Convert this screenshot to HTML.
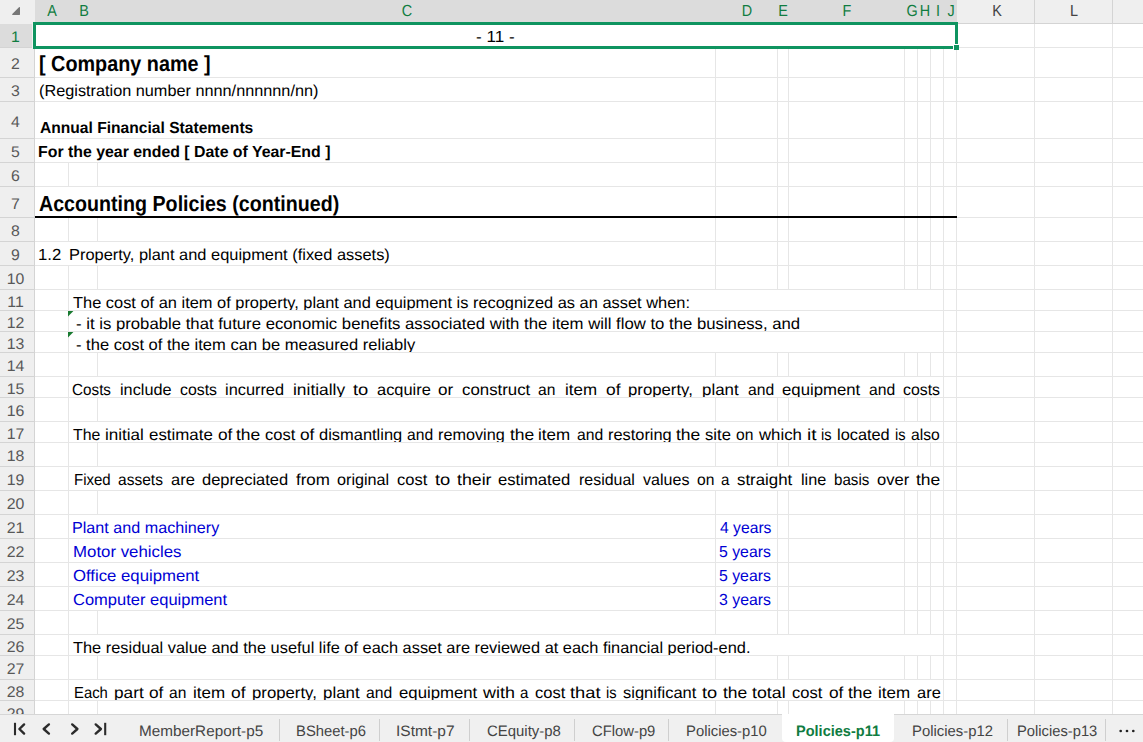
<!DOCTYPE html>
<html lang="en"><head><meta charset="utf-8"><title>Policies-p11</title>
<style>
html,body{margin:0;padding:0;}
body{width:1143px;height:742px;overflow:hidden;background:#fff;position:relative;font-family:"Liberation Sans",sans-serif;}
.a{position:absolute;}
.t{position:absolute;white-space:nowrap;transform-origin:0 50%;display:block;}
.hl{position:absolute;height:1px;background:#e6e6e6;}
.vl{position:absolute;width:1px;background:#e6e6e6;}
.w{position:absolute;background:#fff;}
</style></head><body>
<div id="grid">
<div class="hl" style="left:35px;top:47px;width:1108px"></div>
<div class="hl" style="left:35px;top:77px;width:1108px"></div>
<div class="hl" style="left:35px;top:101px;width:1108px"></div>
<div class="hl" style="left:35px;top:138px;width:1108px"></div>
<div class="hl" style="left:35px;top:162px;width:1108px"></div>
<div class="hl" style="left:35px;top:186px;width:1108px"></div>
<div class="hl" style="left:35px;top:217px;width:1108px"></div>
<div class="hl" style="left:35px;top:241px;width:1108px"></div>
<div class="hl" style="left:35px;top:265px;width:1108px"></div>
<div class="hl" style="left:35px;top:289px;width:1108px"></div>
<div class="hl" style="left:35px;top:310px;width:1108px"></div>
<div class="hl" style="left:35px;top:331px;width:1108px"></div>
<div class="hl" style="left:35px;top:352px;width:1108px"></div>
<div class="hl" style="left:35px;top:376px;width:1108px"></div>
<div class="hl" style="left:35px;top:397px;width:1108px"></div>
<div class="hl" style="left:35px;top:421px;width:1108px"></div>
<div class="hl" style="left:35px;top:442px;width:1108px"></div>
<div class="hl" style="left:35px;top:466px;width:1108px"></div>
<div class="hl" style="left:35px;top:490px;width:1108px"></div>
<div class="hl" style="left:35px;top:514px;width:1108px"></div>
<div class="hl" style="left:35px;top:538px;width:1108px"></div>
<div class="hl" style="left:35px;top:562px;width:1108px"></div>
<div class="hl" style="left:35px;top:586px;width:1108px"></div>
<div class="hl" style="left:35px;top:610px;width:1108px"></div>
<div class="hl" style="left:35px;top:634px;width:1108px"></div>
<div class="hl" style="left:35px;top:655px;width:1108px"></div>
<div class="hl" style="left:35px;top:679px;width:1108px"></div>
<div class="hl" style="left:35px;top:700px;width:1108px"></div>
<div class="vl" style="left:68px;top:24px;height:690px"></div>
<div class="vl" style="left:97px;top:24px;height:690px"></div>
<div class="vl" style="left:715px;top:24px;height:690px"></div>
<div class="vl" style="left:777px;top:24px;height:690px"></div>
<div class="vl" style="left:788px;top:24px;height:690px"></div>
<div class="vl" style="left:904px;top:24px;height:690px"></div>
<div class="vl" style="left:917px;top:24px;height:690px"></div>
<div class="vl" style="left:930px;top:24px;height:690px"></div>
<div class="vl" style="left:943px;top:24px;height:690px"></div>
<div class="vl" style="left:956px;top:24px;height:690px"></div>
<div class="vl" style="left:1034px;top:24px;height:690px"></div>
<div class="vl" style="left:1112px;top:24px;height:690px"></div>
</div>
<div id="covers">
<div class="w" style="left:35px;top:24px;width:921px;height:23px"></div>
<div class="w" style="left:35px;top:48px;width:680px;height:29px"></div>
<div class="w" style="left:35px;top:78px;width:680px;height:23px"></div>
<div class="w" style="left:35px;top:102px;width:680px;height:36px"></div>
<div class="w" style="left:35px;top:139px;width:680px;height:23px"></div>
<div class="w" style="left:35px;top:187px;width:680px;height:30px"></div>
<div class="w" style="left:35px;top:242px;width:680px;height:23px"></div>
<div class="w" style="left:69px;top:290px;width:874px;height:20px"></div>
<div class="w" style="left:69px;top:311px;width:874px;height:20px"></div>
<div class="w" style="left:69px;top:332px;width:874px;height:20px"></div>
<div class="w" style="left:69px;top:377px;width:874px;height:20px"></div>
<div class="w" style="left:69px;top:422px;width:874px;height:20px"></div>
<div class="w" style="left:69px;top:467px;width:874px;height:23px"></div>
<div class="w" style="left:69px;top:635px;width:874px;height:20px"></div>
<div class="w" style="left:69px;top:680px;width:874px;height:20px"></div>
<div class="w" style="left:69px;top:515px;width:646px;height:23px"></div>
<div class="w" style="left:69px;top:539px;width:646px;height:23px"></div>
<div class="w" style="left:69px;top:563px;width:646px;height:23px"></div>
<div class="w" style="left:69px;top:587px;width:646px;height:23px"></div>
</div>
<div class="a" style="left:35px;top:216px;width:922px;height:2px;background:#000"></div>
<div id="cells">
<span class="t " id="r1" style="left:476.31px;top:26.00px;font-size:16px;line-height:21px;color:#000;transform:matrix(1.0666,0,0.001,1,0,0);">- 11 -</span>
<span class="t " id="r2" style="left:39.05px;top:49.00px;font-size:21.8px;line-height:29px;color:#000;font-weight:700;transform:matrix(0.9082,0,0.001,1,0,0);">[ Company name ]</span>
<span class="t " id="r3" style="left:38.56px;top:80.00px;font-size:16px;line-height:21px;color:#000;transform:matrix(1.0167,0,0.001,1,0,0);">(Registration number nnnn/nnnnnn/nn)</span>
<span class="t " id="r4" style="left:39.63px;top:117.00px;font-size:16px;line-height:21px;color:#000;font-weight:700;transform:matrix(0.9751,0,0.001,1,0,0);">Annual Financial Statements</span>
<span class="t " id="r5" style="left:38.39px;top:141.00px;font-size:16px;line-height:21px;color:#000;font-weight:700;transform:matrix(0.9917,0,0.001,1,0,0);">For the year ended [ Date of Year-End ]</span>
<span class="t " id="r7" style="left:38.79px;top:189.00px;font-size:21.8px;line-height:29px;color:#000;font-weight:700;transform:matrix(0.9014,0,0.001,1,0,0);">Accounting Policies (continued)</span>
<span class="t " id="r9a" style="left:38.14px;top:244.00px;font-size:16px;line-height:21px;color:#000;transform:matrix(1.0442,0,0.001,1,0,0);">1.2</span>
<span class="t " id="r9b" style="left:69.31px;top:244.00px;font-size:16px;line-height:21px;color:#000;transform:matrix(1.0257,0,0.001,1,0,0);">Property, plant and equipment (fixed assets)</span>
<div class="a" style="left:69px;top:290px;width:874px;height:20px;overflow:hidden"><span class="t " id="r11" style="left:4.25px;top:2.00px;font-size:16px;line-height:21px;color:#000;transform:matrix(1.0251,0,0.001,1,0,0);">The cost of an item of property, plant and equipment is recognized as an asset when:</span></div>
<div class="a" style="left:69px;top:311px;width:874px;height:20px;overflow:hidden"><span class="t " id="r12" style="left:7.09px;top:2.00px;font-size:16px;line-height:21px;color:#000;transform:matrix(1.0452,0,0.001,1,0,0);">- it is probable that future economic benefits associated with the item will flow to the business, and</span></div>
<div class="a" style="left:69px;top:332px;width:874px;height:20px;overflow:hidden"><span class="t " id="r13" style="left:7.09px;top:2.00px;font-size:16px;line-height:21px;color:#000;transform:matrix(1.0336,0,0.001,1,0,0);">- the cost of the item can be measured reliably</span></div>
<div class="a" id="r15" style="left:69px;top:377px;width:874px;height:20px;overflow:hidden"><span class="t" id="r15_0" style="left:2.81px;top:2.00px;font-size:16px;line-height:21px;color:#000;transform:matrix(0.9534,0,0.001,1,0,0)">Costs</span> <span class="t" id="r15_1" style="left:50.91px;top:2.00px;font-size:16px;line-height:21px;color:#000;transform:matrix(1.0157,0,0.001,1,0,0)">include</span> <span class="t" id="r15_2" style="left:110.99px;top:2.00px;font-size:16px;line-height:21px;color:#000;transform:matrix(0.9908,0,0.001,1,0,0)">costs</span> <span class="t" id="r15_3" style="left:156.25px;top:2.00px;font-size:16px;line-height:21px;color:#000;transform:matrix(1.0205,0,0.001,1,0,0)">incurred</span> <span class="t" id="r15_4" style="left:223.84px;top:2.00px;font-size:16px;line-height:21px;color:#000;transform:matrix(1.0851,0,0.001,1,0,0)">initially</span> <span class="t" id="r15_5" style="left:284.10px;top:2.00px;font-size:16px;line-height:21px;color:#000;transform:matrix(1.1466,0,0.001,1,0,0)">to</span> <span class="t" id="r15_6" style="left:307.82px;top:2.00px;font-size:16px;line-height:21px;color:#000;transform:matrix(1.0251,0,0.001,1,0,0)">acquire</span> <span class="t" id="r15_7" style="left:369.19px;top:2.00px;font-size:16px;line-height:21px;color:#000;transform:matrix(1.0678,0,0.001,1,0,0)">or</span> <span class="t" id="r15_8" style="left:392.59px;top:2.00px;font-size:16px;line-height:21px;color:#000;transform:matrix(1.0520,0,0.001,1,0,0)">construct</span> <span class="t" id="r15_9" style="left:468.90px;top:2.00px;font-size:16px;line-height:21px;color:#000;transform:matrix(0.9777,0,0.001,1,0,0)">an</span> <span class="t" id="r15_10" style="left:495.88px;top:2.00px;font-size:16px;line-height:21px;color:#000;transform:matrix(1.0584,0,0.001,1,0,0)">item</span> <span class="t" id="r15_11" style="left:536.55px;top:2.00px;font-size:16px;line-height:21px;color:#000;transform:matrix(1.0867,0,0.001,1,0,0)">of</span> <span class="t" id="r15_12" style="left:558.94px;top:2.00px;font-size:16px;line-height:21px;color:#000;transform:matrix(1.0460,0,0.001,1,0,0)">property,</span> <span class="t" id="r15_13" style="left:633.04px;top:2.00px;font-size:16px;line-height:21px;color:#000;transform:matrix(1.0547,0,0.001,1,0,0)">plant</span> <span class="t" id="r15_14" style="left:678.74px;top:2.00px;font-size:16px;line-height:21px;color:#000;transform:matrix(0.9812,0,0.001,1,0,0)">and</span> <span class="t" id="r15_15" style="left:713.05px;top:2.00px;font-size:16px;line-height:21px;color:#000;transform:matrix(1.0466,0,0.001,1,0,0)">equipment</span> <span class="t" id="r15_16" style="left:799.58px;top:2.00px;font-size:16px;line-height:21px;color:#000;transform:matrix(0.9812,0,0.001,1,0,0)">and</span> <span class="t" id="r15_17" style="left:834.27px;top:2.00px;font-size:16px;line-height:21px;color:#000;transform:matrix(0.9908,0,0.001,1,0,0)">costs</span></div>
<div class="a" id="r17" style="left:69px;top:422px;width:874px;height:20px;overflow:hidden"><span class="t" id="r17_0" style="left:3.64px;top:2.00px;font-size:16px;line-height:21px;color:#000;transform:matrix(0.9899,0,0.001,1,0,0)">The</span> <span class="t" id="r17_1" style="left:36.07px;top:2.00px;font-size:16px;line-height:21px;color:#000;transform:matrix(1.0667,0,0.001,1,0,0)">initial</span> <span class="t" id="r17_2" style="left:80.13px;top:2.00px;font-size:16px;line-height:21px;color:#000;transform:matrix(1.0551,0,0.001,1,0,0)">estimate</span> <span class="t" id="r17_3" style="left:148.97px;top:2.00px;font-size:16px;line-height:21px;color:#000;transform:matrix(1.0792,0,0.001,1,0,0)">of</span> <span class="t" id="r17_4" style="left:167.03px;top:2.00px;font-size:16px;line-height:21px;color:#000;transform:matrix(1.0921,0,0.001,1,0,0)">the</span> <span class="t" id="r17_5" style="left:195.68px;top:2.00px;font-size:16px;line-height:21px;color:#000;transform:matrix(1.0326,0,0.001,1,0,0)">cost</span> <span class="t" id="r17_6" style="left:230.83px;top:2.00px;font-size:16px;line-height:21px;color:#000;transform:matrix(1.0792,0,0.001,1,0,0)">of</span> <span class="t" id="r17_7" style="left:249.80px;top:2.00px;font-size:16px;line-height:21px;color:#000;transform:matrix(1.0280,0,0.001,1,0,0)">dismantling</span> <span class="t" id="r17_8" style="left:337.70px;top:2.00px;font-size:16px;line-height:21px;color:#000;transform:matrix(0.9774,0,0.001,1,0,0)">and</span> <span class="t" id="r17_9" style="left:369.34px;top:2.00px;font-size:16px;line-height:21px;color:#000;transform:matrix(1.0135,0,0.001,1,0,0)">removing</span> <span class="t" id="r17_10" style="left:440.75px;top:2.00px;font-size:16px;line-height:21px;color:#000;transform:matrix(1.0921,0,0.001,1,0,0)">the</span> <span class="t" id="r17_11" style="left:469.48px;top:2.00px;font-size:16px;line-height:21px;color:#000;transform:matrix(1.0617,0,0.001,1,0,0)">item</span> <span class="t" id="r17_12" style="left:507.66px;top:2.00px;font-size:16px;line-height:21px;color:#000;transform:matrix(0.9812,0,0.001,1,0,0)">and</span> <span class="t" id="r17_13" style="left:539.47px;top:2.00px;font-size:16px;line-height:21px;color:#000;transform:matrix(1.0233,0,0.001,1,0,0)">restoring</span> <span class="t" id="r17_14" style="left:607.03px;top:2.00px;font-size:16px;line-height:21px;color:#000;transform:matrix(1.0921,0,0.001,1,0,0)">the</span> <span class="t" id="r17_15" style="left:636.17px;top:2.00px;font-size:16px;line-height:21px;color:#000;transform:matrix(1.0399,0,0.001,1,0,0)">site</span> <span class="t" id="r17_16" style="left:667.04px;top:2.00px;font-size:16px;line-height:21px;color:#000;transform:matrix(0.9777,0,0.001,1,0,0)">on</span> <span class="t" id="r17_17" style="left:689.76px;top:2.00px;font-size:16px;line-height:21px;color:#000;transform:matrix(1.0487,0,0.001,1,0,0)">which</span> <span class="t" id="r17_18" style="left:737.51px;top:2.00px;font-size:16px;line-height:21px;color:#000;transform:matrix(1.2000,0,0.001,1,0,0)">it</span> <span class="t" id="r17_19" style="left:751.94px;top:2.00px;font-size:16px;line-height:21px;color:#000;transform:matrix(0.9168,0,0.001,1,0,0)">is</span> <span class="t" id="r17_20" style="left:768.43px;top:2.00px;font-size:16px;line-height:21px;color:#000;transform:matrix(1.0214,0,0.001,1,0,0)">located</span> <span class="t" id="r17_21" style="left:826.38px;top:2.00px;font-size:16px;line-height:21px;color:#000;transform:matrix(0.9168,0,0.001,1,0,0)">is</span> <span class="t" id="r17_22" style="left:842.48px;top:2.00px;font-size:16px;line-height:21px;color:#000;transform:matrix(0.9809,0,0.001,1,0,0)">also</span></div>
<div class="a" id="r19" style="left:0;top:0"><span class="t" id="r19_0" style="left:73.52px;top:469.00px;font-size:16px;line-height:21px;color:#000;transform:matrix(0.9380,0,0.001,1,0,0)">Fixed</span> <span class="t" id="r19_1" style="left:118.11px;top:469.00px;font-size:16px;line-height:21px;color:#000;transform:matrix(0.9708,0,0.001,1,0,0)">assets</span> <span class="t" id="r19_2" style="left:170.59px;top:469.00px;font-size:16px;line-height:21px;color:#000;transform:matrix(1.0335,0,0.001,1,0,0)">are</span> <span class="t" id="r19_3" style="left:202.36px;top:469.00px;font-size:16px;line-height:21px;color:#000;transform:matrix(1.0308,0,0.001,1,0,0)">depreciated</span> <span class="t" id="r19_4" style="left:296.14px;top:469.00px;font-size:16px;line-height:21px;color:#000;transform:matrix(1.0594,0,0.001,1,0,0)">from</span> <span class="t" id="r19_5" style="left:337.41px;top:469.00px;font-size:16px;line-height:21px;color:#000;transform:matrix(1.0118,0,0.001,1,0,0)">original</span> <span class="t" id="r19_6" style="left:397.12px;top:469.00px;font-size:16px;line-height:21px;color:#000;transform:matrix(1.0326,0,0.001,1,0,0)">cost</span> <span class="t" id="r19_7" style="left:434.52px;top:469.00px;font-size:16px;line-height:21px;color:#000;transform:matrix(1.1466,0,0.001,1,0,0)">to</span> <span class="t" id="r19_8" style="left:457.21px;top:469.00px;font-size:16px;line-height:21px;color:#000;transform:matrix(1.1084,0,0.001,1,0,0)">their</span> <span class="t" id="r19_9" style="left:498.42px;top:469.00px;font-size:16px;line-height:21px;color:#000;transform:matrix(1.0422,0,0.001,1,0,0)">estimated</span> <span class="t" id="r19_10" style="left:579.30px;top:469.00px;font-size:16px;line-height:21px;color:#000;transform:matrix(0.9959,0,0.001,1,0,0)">residual</span> <span class="t" id="r19_11" style="left:643.17px;top:469.00px;font-size:16px;line-height:21px;color:#000;transform:matrix(1.0032,0,0.001,1,0,0)">values</span> <span class="t" id="r19_12" style="left:696.60px;top:469.00px;font-size:16px;line-height:21px;color:#000;transform:matrix(0.9777,0,0.001,1,0,0)">on</span> <span class="t" id="r19_13" style="left:721.33px;top:469.00px;font-size:16px;line-height:21px;color:#000;transform:matrix(0.9432,0,0.001,1,0,0)">a</span> <span class="t" id="r19_14" style="left:737.47px;top:469.00px;font-size:16px;line-height:21px;color:#000;transform:matrix(1.0540,0,0.001,1,0,0)">straight</span> <span class="t" id="r19_15" style="left:800.98px;top:469.00px;font-size:16px;line-height:21px;color:#000;transform:matrix(1.0158,0,0.001,1,0,0)">line</span> <span class="t" id="r19_16" style="left:834.25px;top:469.00px;font-size:16px;line-height:21px;color:#000;transform:matrix(0.9449,0,0.001,1,0,0)">basis</span> <span class="t" id="r19_17" style="left:876.73px;top:469.00px;font-size:16px;line-height:21px;color:#000;transform:matrix(1.0345,0,0.001,1,0,0)">over</span> <span class="t" id="r19_18" style="left:916.11px;top:469.00px;font-size:16px;line-height:21px;color:#000;transform:matrix(1.0921,0,0.001,1,0,0)">the</span></div>
<span class="t " id="r21" style="left:72.42px;top:517.00px;font-size:16px;line-height:21px;color:#0000d4;transform:matrix(1.0092,0,0.001,1,0,0);">Plant and machinery</span>
<span class="t " id="r22" style="left:72.75px;top:541.00px;font-size:16px;line-height:21px;color:#0000d4;transform:matrix(1.0518,0,0.001,1,0,0);">Motor vehicles</span>
<span class="t " id="r23" style="left:72.67px;top:565.00px;font-size:16px;line-height:21px;color:#0000d4;transform:matrix(1.0456,0,0.001,1,0,0);">Office equipment</span>
<span class="t " id="r24" style="left:72.50px;top:589.00px;font-size:16px;line-height:21px;color:#0000d4;transform:matrix(1.0312,0,0.001,1,0,0);">Computer equipment</span>
<span class="t " id="r21d" style="left:719.60px;top:517.00px;font-size:16px;line-height:21px;color:#0000d4;transform:matrix(0.9807,0,0.001,1,0,0);">4 years</span>
<span class="t " id="r22d" style="left:718.74px;top:541.00px;font-size:16px;line-height:21px;color:#0000d4;transform:matrix(0.9894,0,0.001,1,0,0);">5 years</span>
<span class="t " id="r23d" style="left:718.74px;top:565.00px;font-size:16px;line-height:21px;color:#0000d4;transform:matrix(0.9894,0,0.001,1,0,0);">5 years</span>
<span class="t " id="r24d" style="left:719.44px;top:589.00px;font-size:16px;line-height:21px;color:#0000d4;transform:matrix(0.9908,0,0.001,1,0,0);">3 years</span>
<div class="a" style="left:69px;top:635px;width:874px;height:20px;overflow:hidden"><span class="t " id="r26" style="left:4.25px;top:2.00px;font-size:16px;line-height:21px;color:#000;transform:matrix(1.0237,0,0.001,1,0,0);">The residual value and the useful life of each asset are reviewed at each financial period-end.</span></div>
<div class="a" id="r28" style="left:69px;top:680px;width:874px;height:20px;overflow:hidden"><span class="t" id="r28_0" style="left:4.59px;top:2.00px;font-size:16px;line-height:21px;color:#000;transform:matrix(0.9268,0,0.001,1,0,0)">Each</span> <span class="t" id="r28_1" style="left:44.84px;top:2.00px;font-size:16px;line-height:21px;color:#000;transform:matrix(1.0769,0,0.001,1,0,0)">part</span> <span class="t" id="r28_2" style="left:80.41px;top:2.00px;font-size:16px;line-height:21px;color:#000;transform:matrix(1.0792,0,0.001,1,0,0)">of</span> <span class="t" id="r28_3" style="left:99.93px;top:2.00px;font-size:16px;line-height:21px;color:#000;transform:matrix(0.9721,0,0.001,1,0,0)">an</span> <span class="t" id="r28_4" style="left:124.12px;top:2.00px;font-size:16px;line-height:21px;color:#000;transform:matrix(1.0617,0,0.001,1,0,0)">item</span> <span class="t" id="r28_5" style="left:162.47px;top:2.00px;font-size:16px;line-height:21px;color:#000;transform:matrix(1.0867,0,0.001,1,0,0)">of</span> <span class="t" id="r28_6" style="left:183.22px;top:2.00px;font-size:16px;line-height:21px;color:#000;transform:matrix(1.0460,0,0.001,1,0,0)">property,</span> <span class="t" id="r28_7" style="left:253.88px;top:2.00px;font-size:16px;line-height:21px;color:#000;transform:matrix(1.0547,0,0.001,1,0,0)">plant</span> <span class="t" id="r28_8" style="left:297.08px;top:2.00px;font-size:16px;line-height:21px;color:#000;transform:matrix(0.9812,0,0.001,1,0,0)">and</span> <span class="t" id="r28_9" style="left:329.55px;top:2.00px;font-size:16px;line-height:21px;color:#000;transform:matrix(1.0466,0,0.001,1,0,0)">equipment</span> <span class="t" id="r28_10" style="left:413.59px;top:2.00px;font-size:16px;line-height:21px;color:#000;transform:matrix(1.1211,0,0.001,1,0,0)">with</span> <span class="t" id="r28_11" style="left:450.97px;top:2.00px;font-size:16px;line-height:21px;color:#000;transform:matrix(0.9432,0,0.001,1,0,0)">a</span> <span class="t" id="r28_12" style="left:465.76px;top:2.00px;font-size:16px;line-height:21px;color:#000;transform:matrix(1.0326,0,0.001,1,0,0)">cost</span> <span class="t" id="r28_13" style="left:501.19px;top:2.00px;font-size:16px;line-height:21px;color:#000;transform:matrix(1.1466,0,0.001,1,0,0)">that</span> <span class="t" id="r28_14" style="left:537.44px;top:2.00px;font-size:16px;line-height:21px;color:#000;transform:matrix(0.9168,0,0.001,1,0,0)">is</span> <span class="t" id="r28_15" style="left:553.84px;top:2.00px;font-size:16px;line-height:21px;color:#000;transform:matrix(1.0301,0,0.001,1,0,0)">significant</span> <span class="t" id="r28_16" style="left:632.71px;top:2.00px;font-size:16px;line-height:21px;color:#000;transform:matrix(1.1391,0,0.001,1,0,0)">to</span> <span class="t" id="r28_17" style="left:653.61px;top:2.00px;font-size:16px;line-height:21px;color:#000;transform:matrix(1.0921,0,0.001,1,0,0)">the</span> <span class="t" id="r28_18" style="left:683.18px;top:2.00px;font-size:16px;line-height:21px;color:#000;transform:matrix(1.1107,0,0.001,1,0,0)">total</span> <span class="t" id="r28_19" style="left:723.40px;top:2.00px;font-size:16px;line-height:21px;color:#000;transform:matrix(1.0326,0,0.001,1,0,0)">cost</span> <span class="t" id="r28_20" style="left:759.55px;top:2.00px;font-size:16px;line-height:21px;color:#000;transform:matrix(1.0792,0,0.001,1,0,0)">of</span> <span class="t" id="r28_21" style="left:778.67px;top:2.00px;font-size:16px;line-height:21px;color:#000;transform:matrix(1.0921,0,0.001,1,0,0)">the</span> <span class="t" id="r28_22" style="left:809.20px;top:2.00px;font-size:16px;line-height:21px;color:#000;transform:matrix(1.0617,0,0.001,1,0,0)">item</span> <span class="t" id="r28_23" style="left:847.67px;top:2.00px;font-size:16px;line-height:21px;color:#000;transform:matrix(1.0292,0,0.001,1,0,0)">are</span></div>
</div>
<svg class="a" style="left:68px;top:311px" width="7" height="7" viewBox="0 0 7 7"><path d="M0 0H5.4L0 5.4Z" fill="#187a30"/></svg>
<svg class="a" style="left:68px;top:332px" width="7" height="7" viewBox="0 0 7 7"><path d="M0 0H5.4L0 5.4Z" fill="#187a30"/></svg>
<div id="colhdr" class="a" style="left:0;top:0;width:1143px;height:24px;background:#efefef">
<div class="a" style="left:957px;top:23px;width:186px;height:1px;background:#d4d4d4"></div>
<div class="a" style="left:35px;top:0;width:922px;height:24px;background:#dcdcdc"></div>
<div class="a" style="left:1034px;top:0;width:1px;height:24px;background:#d4d4d4"></div>
<div class="a" style="left:1112px;top:0;width:1px;height:24px;background:#d4d4d4"></div>
<svg class="a" style="left:11px;top:6px" width="10" height="10" viewBox="0 0 10 10"><path d="M8.4 1.6V8.3H1.7Z" fill="#777" stroke="#777" stroke-width="1.2" stroke-linejoin="round"/></svg>
</div>
<div id="collabels">
<span class="t ch" id="hA" style="left:42.2px;top:0px;width:20px;text-align:center;font-size:16px;line-height:21px;color:#107c41;transform-origin:50% 50%;transform:matrix(0.9000,0,0.001,1,0,0)">A</span>
<span class="t ch" id="hB" style="left:74.2px;top:0px;width:20px;text-align:center;font-size:16px;line-height:21px;color:#107c41;transform-origin:50% 50%;transform:matrix(0.9000,0,0.001,1,0,0)">B</span>
<span class="t ch" id="hC" style="left:396.5px;top:0px;width:20px;text-align:center;font-size:16px;line-height:21px;color:#107c41;transform-origin:50% 50%;transform:matrix(0.9000,0,0.001,1,0,0)">C</span>
<span class="t ch" id="hD" style="left:736.5px;top:0px;width:20px;text-align:center;font-size:16px;line-height:21px;color:#107c41;transform-origin:50% 50%;transform:matrix(0.9000,0,0.001,1,0,0)">D</span>
<span class="t ch" id="hE" style="left:773px;top:0px;width:20px;text-align:center;font-size:16px;line-height:21px;color:#107c41;transform-origin:50% 50%;transform:matrix(0.9000,0,0.001,1,0,0)">E</span>
<span class="t ch" id="hF" style="left:836.5px;top:0px;width:20px;text-align:center;font-size:16px;line-height:21px;color:#107c41;transform-origin:50% 50%;transform:matrix(0.9000,0,0.001,1,0,0)">F</span>
<span class="t ch" id="hG" style="left:901.8px;top:0px;width:20px;text-align:center;font-size:16px;line-height:21px;color:#107c41;transform-origin:50% 50%;transform:matrix(0.9000,0,0.001,1,0,0)">G</span>
<span class="t ch" id="hH" style="left:914.8px;top:0px;width:20px;text-align:center;font-size:16px;line-height:21px;color:#107c41;transform-origin:50% 50%;transform:matrix(0.9000,0,0.001,1,0,0)">H</span>
<span class="t ch" id="hI" style="left:927.5px;top:0px;width:20px;text-align:center;font-size:16px;line-height:21px;color:#107c41;transform-origin:50% 50%;transform:matrix(0.9000,0,0.001,1,0,0)">I</span>
<span class="t ch" id="hJ" style="left:940.5px;top:0px;width:20px;text-align:center;font-size:16px;line-height:21px;color:#107c41;transform-origin:50% 50%;transform:matrix(0.9000,0,0.001,1,0,0)">J</span>
<span class="t ch" id="hK" style="left:987.2px;top:0px;width:20px;text-align:center;font-size:16px;line-height:21px;color:#444;transform-origin:50% 50%;transform:matrix(0.9000,0,0.001,1,0,0)">K</span>
<span class="t ch" id="hL" style="left:1063.5px;top:0px;width:20px;text-align:center;font-size:16px;line-height:21px;color:#444;transform-origin:50% 50%;transform:matrix(0.9000,0,0.001,1,0,0)">L</span>
</div>
<div id="rowhdr" class="a" style="left:0;top:24px;width:34px;height:690px;background:#efefef;overflow:hidden">
<div class="a" style="left:0;top:0;width:34px;height:24px;background:#dcdcdc"></div>
<div class="a" style="left:0;top:23px;width:34px;height:1px;background:#d4d4d4"></div>
<div class="a" style="left:0;top:53px;width:34px;height:1px;background:#d4d4d4"></div>
<div class="a" style="left:0;top:77px;width:34px;height:1px;background:#d4d4d4"></div>
<div class="a" style="left:0;top:114px;width:34px;height:1px;background:#d4d4d4"></div>
<div class="a" style="left:0;top:138px;width:34px;height:1px;background:#d4d4d4"></div>
<div class="a" style="left:0;top:162px;width:34px;height:1px;background:#d4d4d4"></div>
<div class="a" style="left:0;top:193px;width:34px;height:1px;background:#d4d4d4"></div>
<div class="a" style="left:0;top:217px;width:34px;height:1px;background:#d4d4d4"></div>
<div class="a" style="left:0;top:241px;width:34px;height:1px;background:#d4d4d4"></div>
<div class="a" style="left:0;top:265px;width:34px;height:1px;background:#d4d4d4"></div>
<div class="a" style="left:0;top:286px;width:34px;height:1px;background:#d4d4d4"></div>
<div class="a" style="left:0;top:307px;width:34px;height:1px;background:#d4d4d4"></div>
<div class="a" style="left:0;top:328px;width:34px;height:1px;background:#d4d4d4"></div>
<div class="a" style="left:0;top:352px;width:34px;height:1px;background:#d4d4d4"></div>
<div class="a" style="left:0;top:373px;width:34px;height:1px;background:#d4d4d4"></div>
<div class="a" style="left:0;top:397px;width:34px;height:1px;background:#d4d4d4"></div>
<div class="a" style="left:0;top:418px;width:34px;height:1px;background:#d4d4d4"></div>
<div class="a" style="left:0;top:442px;width:34px;height:1px;background:#d4d4d4"></div>
<div class="a" style="left:0;top:466px;width:34px;height:1px;background:#d4d4d4"></div>
<div class="a" style="left:0;top:490px;width:34px;height:1px;background:#d4d4d4"></div>
<div class="a" style="left:0;top:514px;width:34px;height:1px;background:#d4d4d4"></div>
<div class="a" style="left:0;top:538px;width:34px;height:1px;background:#d4d4d4"></div>
<div class="a" style="left:0;top:562px;width:34px;height:1px;background:#d4d4d4"></div>
<div class="a" style="left:0;top:586px;width:34px;height:1px;background:#d4d4d4"></div>
<div class="a" style="left:0;top:610px;width:34px;height:1px;background:#d4d4d4"></div>
<div class="a" style="left:0;top:631px;width:34px;height:1px;background:#d4d4d4"></div>
<div class="a" style="left:0;top:655px;width:34px;height:1px;background:#d4d4d4"></div>
<div class="a" style="left:0;top:676px;width:34px;height:1px;background:#d4d4d4"></div>
<div class="a" style="left:0;top:700px;width:34px;height:1px;background:#d4d4d4"></div>
<span class="t" style="left:0;top:2.00px;width:31px;text-align:center;font-size:15.4px;line-height:21px;color:#107c41;transform-origin:50% 50%;transform:matrix(1.0300,0,0.001,1,0,0)">1</span>
<span class="t" style="left:0;top:29.00px;width:31px;text-align:center;font-size:15.4px;line-height:21px;color:#585858;transform-origin:50% 50%;transform:matrix(1.0300,0,0.001,1,0,0)">2</span>
<span class="t" style="left:0;top:56.00px;width:31px;text-align:center;font-size:15.4px;line-height:21px;color:#585858;transform-origin:50% 50%;transform:matrix(1.0300,0,0.001,1,0,0)">3</span>
<span class="t" style="left:0;top:87.00px;width:31px;text-align:center;font-size:15.4px;line-height:21px;color:#585858;transform-origin:50% 50%;transform:matrix(1.0300,0,0.001,1,0,0)">4</span>
<span class="t" style="left:0;top:117.00px;width:31px;text-align:center;font-size:15.4px;line-height:21px;color:#585858;transform-origin:50% 50%;transform:matrix(1.0300,0,0.001,1,0,0)">5</span>
<span class="t" style="left:0;top:141.00px;width:31px;text-align:center;font-size:15.4px;line-height:21px;color:#585858;transform-origin:50% 50%;transform:matrix(1.0300,0,0.001,1,0,0)">6</span>
<span class="t" style="left:0;top:169.00px;width:31px;text-align:center;font-size:15.4px;line-height:21px;color:#585858;transform-origin:50% 50%;transform:matrix(1.0300,0,0.001,1,0,0)">7</span>
<span class="t" style="left:0;top:196.00px;width:31px;text-align:center;font-size:15.4px;line-height:21px;color:#585858;transform-origin:50% 50%;transform:matrix(1.0300,0,0.001,1,0,0)">8</span>
<span class="t" style="left:0;top:220.00px;width:31px;text-align:center;font-size:15.4px;line-height:21px;color:#585858;transform-origin:50% 50%;transform:matrix(1.0300,0,0.001,1,0,0)">9</span>
<span class="t" style="left:0;top:244.00px;width:31px;text-align:center;font-size:15.4px;line-height:21px;color:#585858;transform-origin:50% 50%;transform:matrix(1.0300,0,0.001,1,0,0)">10</span>
<span class="t" style="left:0;top:267.00px;width:31px;text-align:center;font-size:15.4px;line-height:21px;color:#585858;transform-origin:50% 50%;transform:matrix(1.0300,0,0.001,1,0,0)">11</span>
<span class="t" style="left:0;top:288.00px;width:31px;text-align:center;font-size:15.4px;line-height:21px;color:#585858;transform-origin:50% 50%;transform:matrix(1.0300,0,0.001,1,0,0)">12</span>
<span class="t" style="left:0;top:309.00px;width:31px;text-align:center;font-size:15.4px;line-height:21px;color:#585858;transform-origin:50% 50%;transform:matrix(1.0300,0,0.001,1,0,0)">13</span>
<span class="t" style="left:0;top:331.00px;width:31px;text-align:center;font-size:15.4px;line-height:21px;color:#585858;transform-origin:50% 50%;transform:matrix(1.0300,0,0.001,1,0,0)">14</span>
<span class="t" style="left:0;top:354.00px;width:31px;text-align:center;font-size:15.4px;line-height:21px;color:#585858;transform-origin:50% 50%;transform:matrix(1.0300,0,0.001,1,0,0)">15</span>
<span class="t" style="left:0;top:376.00px;width:31px;text-align:center;font-size:15.4px;line-height:21px;color:#585858;transform-origin:50% 50%;transform:matrix(1.0300,0,0.001,1,0,0)">16</span>
<span class="t" style="left:0;top:399.00px;width:31px;text-align:center;font-size:15.4px;line-height:21px;color:#585858;transform-origin:50% 50%;transform:matrix(1.0300,0,0.001,1,0,0)">17</span>
<span class="t" style="left:0;top:421.00px;width:31px;text-align:center;font-size:15.4px;line-height:21px;color:#585858;transform-origin:50% 50%;transform:matrix(1.0300,0,0.001,1,0,0)">18</span>
<span class="t" style="left:0;top:445.00px;width:31px;text-align:center;font-size:15.4px;line-height:21px;color:#585858;transform-origin:50% 50%;transform:matrix(1.0300,0,0.001,1,0,0)">19</span>
<span class="t" style="left:0;top:469.00px;width:31px;text-align:center;font-size:15.4px;line-height:21px;color:#585858;transform-origin:50% 50%;transform:matrix(1.0300,0,0.001,1,0,0)">20</span>
<span class="t" style="left:0;top:493.00px;width:31px;text-align:center;font-size:15.4px;line-height:21px;color:#585858;transform-origin:50% 50%;transform:matrix(1.0300,0,0.001,1,0,0)">21</span>
<span class="t" style="left:0;top:517.00px;width:31px;text-align:center;font-size:15.4px;line-height:21px;color:#585858;transform-origin:50% 50%;transform:matrix(1.0300,0,0.001,1,0,0)">22</span>
<span class="t" style="left:0;top:541.00px;width:31px;text-align:center;font-size:15.4px;line-height:21px;color:#585858;transform-origin:50% 50%;transform:matrix(1.0300,0,0.001,1,0,0)">23</span>
<span class="t" style="left:0;top:565.00px;width:31px;text-align:center;font-size:15.4px;line-height:21px;color:#585858;transform-origin:50% 50%;transform:matrix(1.0300,0,0.001,1,0,0)">24</span>
<span class="t" style="left:0;top:589.00px;width:31px;text-align:center;font-size:15.4px;line-height:21px;color:#585858;transform-origin:50% 50%;transform:matrix(1.0300,0,0.001,1,0,0)">25</span>
<span class="t" style="left:0;top:612.00px;width:31px;text-align:center;font-size:15.4px;line-height:21px;color:#585858;transform-origin:50% 50%;transform:matrix(1.0300,0,0.001,1,0,0)">26</span>
<span class="t" style="left:0;top:634.00px;width:31px;text-align:center;font-size:15.4px;line-height:21px;color:#585858;transform-origin:50% 50%;transform:matrix(1.0300,0,0.001,1,0,0)">27</span>
<span class="t" style="left:0;top:657.00px;width:31px;text-align:center;font-size:15.4px;line-height:21px;color:#585858;transform-origin:50% 50%;transform:matrix(1.0300,0,0.001,1,0,0)">28</span>
<span class="t" style="left:0;top:679.00px;width:31px;text-align:center;font-size:15.4px;line-height:21px;color:#585858;transform-origin:50% 50%;transform:matrix(1.0300,0,0.001,1,0,0)">29</span>
</div>
<div class="a" style="left:34px;top:24px;width:1px;height:690px;background:#d4d4d4"></div>
<div class="a" style="left:32px;top:24px;width:1px;height:24px;background:#f3f3f3"></div>
<div id="sel" class="a" style="left:33px;top:22px;width:919px;height:21px;border:3px solid #0f9460"></div>
<div class="a" style="left:953px;top:44px;width:6px;height:6px;background:#fff"></div>
<div class="a" style="left:954px;top:45px;width:5px;height:5px;background:#0f9460"></div>
<div id="tabs" class="a" style="left:0;top:714px;width:1143px;height:28px;background:#f0f0f0">
<div class="a" style="left:0;top:0;width:1143px;height:1px;background:#d6d6d6"></div>
<div class="a" style="left:782px;top:0;width:112px;height:28px;background:#fff;border-radius:0 0 4px 4px"></div>
<svg class="a" style="left:0;top:0" width="120" height="28" viewBox="0 714 120 28" fill="none" stroke="#2b2b2b" stroke-width="2.4" stroke-linecap="round" stroke-linejoin="round"><path d="M15 722.8V735.2" stroke-linecap="butt" stroke-width="2.1"/><path d="M24.1 724.4L19.4 729L24.1 733.6"/><path d="M48.9 724.4L43.7 729L48.9 733.6"/><path d="M72.2 724.4L77.4 729L72.2 733.6"/><path d="M95.7 724.4L100.9 729L95.7 733.6"/><path d="M105.2 722.8V735.2" stroke-linecap="butt" stroke-width="2.1"/></svg>
<span class="t" id="tab0" style="left:138.85px;top:6.00px;font-size:15.1px;line-height:21px;color:#444;transform:matrix(1.0136,0,0.001,1,0,0)">MemberReport-p5</span>
<span class="t" id="tab1" style="left:295.56px;top:6.00px;font-size:15.1px;line-height:21px;color:#444;transform:matrix(0.9813,0,0.001,1,0,0)">BSheet-p6</span>
<span class="t" id="tab2" style="left:396.07px;top:6.00px;font-size:15.1px;line-height:21px;color:#444;transform:matrix(1.0257,0,0.001,1,0,0)">IStmt-p7</span>
<span class="t" id="tab3" style="left:486.50px;top:6.00px;font-size:15.1px;line-height:21px;color:#444;transform:matrix(0.9897,0,0.001,1,0,0)">CEquity-p8</span>
<span class="t" id="tab4" style="left:591.50px;top:6.00px;font-size:15.1px;line-height:21px;color:#444;transform:matrix(0.9809,0,0.001,1,0,0)">CFlow-p9</span>
<span class="t" id="tab5" style="left:685.63px;top:6.00px;font-size:15.1px;line-height:21px;color:#444;transform:matrix(0.9820,0,0.001,1,0,0)">Policies-p10</span>
<span class="t" id="tab6" style="left:796.25px;top:6.00px;font-size:15.1px;line-height:21px;color:#107c41;font-weight:700;transform:matrix(0.9632,0,0.001,1,0,0)">Policies-p11</span>
<span class="t" id="tab7" style="left:911.53px;top:6.00px;font-size:15.1px;line-height:21px;color:#444;transform:matrix(0.9850,0,0.001,1,0,0)">Policies-p12</span>
<span class="t" id="tab8" style="left:1016.93px;top:6.00px;font-size:15.1px;line-height:21px;color:#444;transform:matrix(0.9766,0,0.001,1,0,0)">Policies-p13</span>
<div class="a" style="left:279.0px;top:5px;width:1px;height:22px;background:#cfcfcf"></div>
<div class="a" style="left:379.0px;top:5px;width:1px;height:22px;background:#cfcfcf"></div>
<div class="a" style="left:469.0px;top:5px;width:1px;height:22px;background:#cfcfcf"></div>
<div class="a" style="left:574.0px;top:5px;width:1px;height:22px;background:#cfcfcf"></div>
<div class="a" style="left:668.0px;top:5px;width:1px;height:22px;background:#cfcfcf"></div>
<div class="a" style="left:1007.0px;top:5px;width:1px;height:22px;background:#cfcfcf"></div>
<div class="a" style="left:1105.0px;top:5px;width:1px;height:22px;background:#cfcfcf"></div>
<svg class="a" style="left:1114px;top:12px" width="26" height="10" viewBox="1114 726 26 10"><circle cx="1120.7" cy="731" r="1.35" fill="#222"/><circle cx="1127" cy="731" r="1.35" fill="#222"/><circle cx="1133.3" cy="731" r="1.35" fill="#222"/></svg>
</div>
</body></html>
